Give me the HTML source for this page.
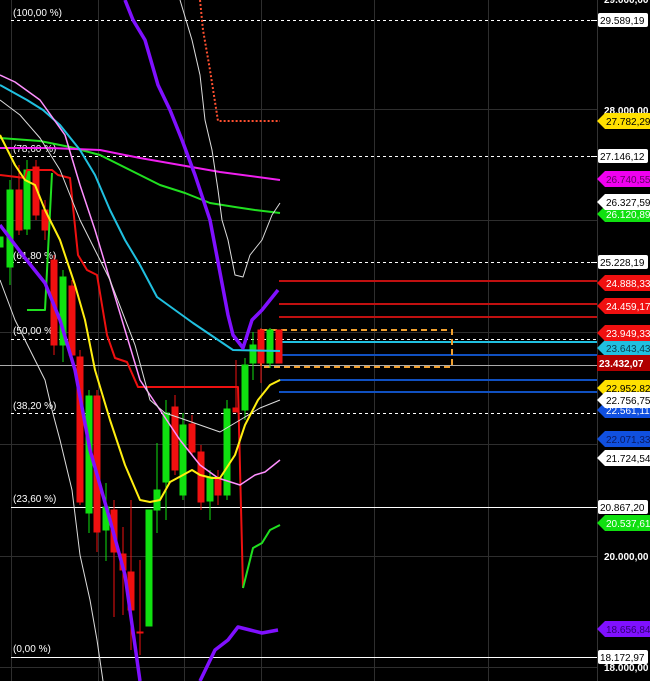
<!DOCTYPE html>
<html><head><meta charset="utf-8"><style>
html,body{margin:0;padding:0;background:#000;width:650px;height:681px;overflow:hidden}
svg{display:block}
text{font-family:"Liberation Sans",sans-serif;font-size:10px}
</style></head><body>
<svg width="650" height="681" viewBox="0 0 650 681" xmlns="http://www.w3.org/2000/svg">
<rect width="650" height="681" fill="#000"/>
<g stroke="#2e2e2e" stroke-width="1">
<line x1="11.5" y1="0" x2="11.5" y2="681"/><line x1="98.5" y1="0" x2="98.5" y2="681"/><line x1="184.5" y1="0" x2="184.5" y2="681"/><line x1="261.5" y1="0" x2="261.5" y2="681"/><line x1="374.5" y1="0" x2="374.5" y2="681"/><line x1="488.5" y1="0" x2="488.5" y2="681"/>
<line x1="0" y1="109.5" x2="597" y2="109.5"/><line x1="0" y1="220.5" x2="597" y2="220.5"/><line x1="0" y1="332.5" x2="597" y2="332.5"/><line x1="0" y1="444.5" x2="597" y2="444.5"/><line x1="0" y1="556.5" x2="597" y2="556.5"/><line x1="0" y1="667.5" x2="597" y2="667.5"/>
<line x1="597.5" y1="0" x2="597.5" y2="681" stroke="#333"/>
</g>
<g stroke="#fff" stroke-width="1" stroke-dasharray="3,3">
<line x1="11" y1="20.5" x2="597" y2="20.5"/><line x1="11" y1="156.5" x2="597" y2="156.5"/><line x1="11" y1="262.5" x2="597" y2="262.5"/><line x1="11" y1="339.5" x2="597" y2="339.5"/><line x1="11" y1="413.5" x2="597" y2="413.5"/>
</g>
<line x1="11" y1="507.5" x2="597" y2="507.5" stroke="#fff"/>
<line x1="11" y1="657.5" x2="597" y2="657.5" stroke="#fff"/>
<line x1="0" y1="365.5" x2="597" y2="365.5" stroke="#aaa"/>
<g fill="#fff">
<text x="13" y="16">(100,00 %)</text><text x="13" y="152">(78,60 %)</text><text x="13" y="259">(61,80 %)</text><text x="13" y="334">(50,00 %)</text><text x="13" y="409">(38,20 %)</text><text x="13" y="502">(23,60 %)</text><text x="13" y="652">(0,00 %)</text>
</g>
<!-- right horizontal lines -->
<g stroke-width="2">
<line x1="279" y1="281" x2="597" y2="281" stroke="#c01010"/>
<line x1="279" y1="304" x2="597" y2="304" stroke="#c01010"/>
<line x1="279" y1="317" x2="597" y2="317" stroke="#c01010"/>
<line x1="279" y1="342" x2="597" y2="342" stroke="#20c0e0"/>
<line x1="279" y1="355" x2="597" y2="355" stroke="#1050c0"/>
<line x1="279" y1="380" x2="597" y2="380" stroke="#1050c0"/>
<line x1="279" y1="392" x2="597" y2="392" stroke="#1050c0"/>
</g>
<rect x="261" y="330" width="191" height="37" fill="none" stroke="#f0a030" stroke-width="2" stroke-dasharray="6,4"/>
<!-- candles -->
<g stroke-width="1">
<g fill="#10e010" stroke="#10e010">
<line x1="10" y1="180" x2="10" y2="285"/><rect x="7" y="190" width="6" height="77"/>
<line x1="27" y1="160" x2="27" y2="235"/><rect x="24" y="170" width="6" height="59"/>
<line x1="63" y1="270" x2="63" y2="362"/><rect x="60" y="277" width="6" height="68"/>
<line x1="89" y1="390" x2="89" y2="533"/><rect x="86" y="396" width="6" height="117"/>
<line x1="106" y1="483" x2="106" y2="561"/><rect x="103" y="507" width="6" height="23"/>
<rect x="146" y="510" width="6" height="116"/>
<line x1="157" y1="443" x2="157" y2="533"/><rect x="154" y="490" width="6" height="20"/>
<line x1="166" y1="400" x2="166" y2="520"/><rect x="163" y="413" width="6" height="69"/>
<line x1="183" y1="413" x2="183" y2="500"/><rect x="180" y="425" width="6" height="70"/>
<line x1="210" y1="470" x2="210" y2="520"/><rect x="207" y="477" width="6" height="24"/>
<line x1="227" y1="400" x2="227" y2="500"/><rect x="224" y="409" width="6" height="86"/>
<line x1="245" y1="358" x2="245" y2="420"/><rect x="242" y="365" width="6" height="45"/>
<line x1="253" y1="332" x2="253" y2="380"/><rect x="250" y="345" width="6" height="18"/>
<line x1="270" y1="328" x2="270" y2="368"/><rect x="267" y="330" width="6" height="33"/>
<rect x="0" y="237" width="3" height="10"/>
</g>
<g fill="#f01010" stroke="#f01010">
<line x1="19" y1="165" x2="19" y2="235"/><rect x="16" y="190" width="6" height="40"/>
<line x1="36" y1="160" x2="36" y2="220"/><rect x="33" y="167" width="6" height="48"/>
<line x1="45" y1="200" x2="45" y2="240"/><rect x="42" y="210" width="6" height="20"/>
<line x1="54" y1="255" x2="54" y2="355"/><rect x="51" y="260" width="6" height="85"/>
<line x1="72" y1="280" x2="72" y2="365"/><rect x="69" y="286" width="6" height="69"/>
<line x1="80" y1="350" x2="80" y2="505"/><rect x="77" y="357" width="6" height="145"/>
<line x1="97" y1="390" x2="97" y2="552"/><rect x="94" y="396" width="6" height="136"/>
<line x1="114" y1="500" x2="114" y2="617"/><rect x="111" y="510" width="6" height="42"/>
<line x1="123" y1="527" x2="123" y2="615"/><rect x="120" y="554" width="6" height="16"/>
<line x1="131" y1="500" x2="131" y2="650"/><rect x="128" y="572" width="6" height="38"/>
<line x1="140" y1="560" x2="140" y2="655"/><rect x="137" y="632" width="6" height="1"/>
<line x1="175" y1="395" x2="175" y2="475"/><rect x="172" y="407" width="6" height="63"/>
<line x1="192" y1="415" x2="192" y2="455"/><rect x="189" y="424" width="6" height="28"/>
<line x1="201" y1="445" x2="201" y2="510"/><rect x="198" y="452" width="6" height="50"/>
<line x1="218" y1="470" x2="218" y2="505"/><rect x="215" y="478" width="6" height="17"/>
<line x1="236" y1="360" x2="236" y2="412"/><rect x="233" y="408" width="6" height="4"/>
<line x1="261" y1="328" x2="261" y2="383"/><rect x="258" y="330" width="6" height="33"/>
<rect x="276" y="330" width="6" height="33"/>
</g>
</g>
<!-- lines -->
<g fill="none" stroke-linejoin="round">
<polyline stroke="#ff5030" stroke-width="2" stroke-dasharray="2,2" points="200,0 203,30 210,70 218,121 280,121"/>
<polyline stroke="#ee1010" stroke-width="2" points="0,175 25,178 27,170 52,170 58,175 70,178 78,255 87,270 97,275 107,335 115,358 127,362 138,387 238,387 243,588"/>
<polyline stroke="#20e020" stroke-width="2" points="0,138 40,141 70,147 100,155 130,170 160,185 185,193 210,203 235,207 255,210 280,213"/>
<polyline stroke="#20e020" stroke-width="2" points="27,310 45,310 52,173"/>
<polyline stroke="#20e020" stroke-width="2" points="243,588 253,548 262,543 270,530 280,525"/>
<polyline stroke="#f020f0" stroke-width="2" points="0,148 50,148 100,150 140,158 180,165 220,172 280,180"/>
<polyline stroke="#20c0e0" stroke-width="2" points="0,85 27,100 43,110 60,125 80,150 95,175 110,210 125,240 140,265 157,297 193,323 233,350 280,351"/>
<polyline stroke="#ff90ff" stroke-width="1.5" points="0,75 15,82 40,100 65,135 80,185 95,230 110,280 125,330 140,380 160,410 180,440 200,465 218,478 240,485 255,475 265,472 280,460"/>
<polyline stroke="#ddd" stroke-width="1" points="0,100 20,115 40,138 60,170 80,220 110,280 135,345 150,400 165,413 180,418 200,425 220,432 240,420 260,408 280,400"/>
<polyline stroke="#ddd" stroke-width="1" points="0,280 15,320 30,350 45,380 52,410 60,440 72,490 80,555 90,600 97,640 103,681"/>
<polyline stroke="#ddd" stroke-width="1" points="180,0 192,40 200,75 205,120 212,150 218,190 222,220 228,240 235,275 243,277 250,255 262,240 272,215 280,203"/>
<polyline stroke="#ffee10" stroke-width="2" points="0,135 15,165 25,180 35,185 45,210 60,240 75,285 85,320 95,370 110,420 125,465 140,500 150,502 160,500 170,482 183,475 192,470 200,475 212,478 220,478 235,455 245,425 258,400 270,385 280,380"/>
<polyline stroke="#8010ff" stroke-width="3.5" points="125,0 133,20 145,40 158,85 170,110 182,140 195,175 210,220 218,262 228,315 233,335 243,348 252,320 262,310 278,290"/>
<polyline stroke="#8010ff" stroke-width="3.5" points="0,225 25,258 45,283 60,320 75,370 90,450 110,520 125,575 140,681"/>
<polyline stroke="#8010ff" stroke-width="3.5" points="200,681 215,650 228,640 238,627 250,630 262,633 278,630"/>
</g>
<!-- axis labels -->
<g font-size="10">
<g stroke="#fff"><line x1="591" y1="20.5" x2="597" y2="20.5"/><line x1="591" y1="156.5" x2="597" y2="156.5"/><line x1="591" y1="262.5" x2="597" y2="262.5"/><line x1="591" y1="507.5" x2="597" y2="507.5"/><line x1="591" y1="657.5" x2="597" y2="657.5"/></g>
<text x="604" y="3" fill="#fff" font-weight="bold">29.000,00</text>
<text x="604" y="114" fill="#fff" font-weight="bold">28.000,00</text>
<text x="604" y="560" fill="#fff" font-weight="bold">20.000,00</text>
<text x="604" y="671" fill="#fff" font-weight="bold">18.000,00</text>
<g fill="#fff"><rect x="598" y="13" width="50" height="14" rx="2"/><rect x="598" y="149" width="50" height="14" rx="2"/><rect x="598" y="255" width="50" height="14" rx="2"/><rect x="598" y="500" width="50" height="14" rx="2"/><rect x="598" y="650" width="50" height="14" rx="2"/></g>
<g fill="#000"><text x="600" y="24">29.589,19</text><text x="600" y="160">27.146,12</text><text x="600" y="266">25.228,19</text><text x="600" y="511">20.867,20</text><text x="600" y="661">18.172,97</text></g>
<!-- arrow tags -->
<path d="M597,121 l8,-8 h45 v16 h-45z" fill="#ffe000"/><text x="606" y="125" fill="#000">27.782,29</text>
<path d="M597,179 l8,-8 h45 v16 h-45z" fill="#f000f0"/><text x="606" y="183" fill="#600060">26.740,55</text>
<path d="M597,214 l8,-8 h45 v16 h-45z" fill="#10e010"/><text x="606" y="218" fill="#fff">26.120,89</text>
<path d="M597,202 l8,-8 h45 v16 h-45z" fill="#fff"/><text x="606" y="206" fill="#000">26.327,59</text>
<path d="M597,283 l8,-8 h45 v16 h-45z" fill="#f01010"/><text x="606" y="287" fill="#fff">24.888,33</text>
<path d="M597,306 l8,-8 h45 v16 h-45z" fill="#f01010"/><text x="606" y="310" fill="#fff">24.459,17</text>
<path d="M597,348 l8,-8 h45 v16 h-45z" fill="#20c0e0"/><text x="606" y="352" fill="#0a4050">23.643,43</text>
<path d="M597,333 l8,-8 h45 v16 h-45z" fill="#f01010"/><text x="606" y="337" fill="#fff">23.949,33</text>
<rect x="597" y="355" width="53" height="16" fill="#b00000"/><text x="599" y="367" fill="#fff" font-weight="bold">23.432,07</text>
<path d="M597,410 l8,-8 h45 v16 h-45z" fill="#1050e0"/><text x="606" y="414" fill="#fff">22.561,11</text>
<path d="M597,388 l8,-8 h45 v16 h-45z" fill="#ffe000"/><text x="606" y="392" fill="#000">22.952,82</text>
<path d="M597,400 l8,-8 h45 v16 h-45z" fill="#fff"/><text x="606" y="404" fill="#000">22.756,75</text>
<path d="M597,439 l8,-8 h45 v16 h-45z" fill="#1050e0"/><text x="606" y="443" fill="#0a1a60">22.071,33</text>
<path d="M597,458 l8,-8 h45 v16 h-45z" fill="#fff"/><text x="606" y="462" fill="#000">21.724,54</text>
<path d="M597,523 l8,-8 h45 v16 h-45z" fill="#10e010"/><text x="606" y="527" fill="#fff">20.537,61</text>
<path d="M597,629 l8,-8 h45 v16 h-45z" fill="#8010ff"/><text x="606" y="633" fill="#300070">18.656,84</text>
</g>
</svg>
</body></html>
